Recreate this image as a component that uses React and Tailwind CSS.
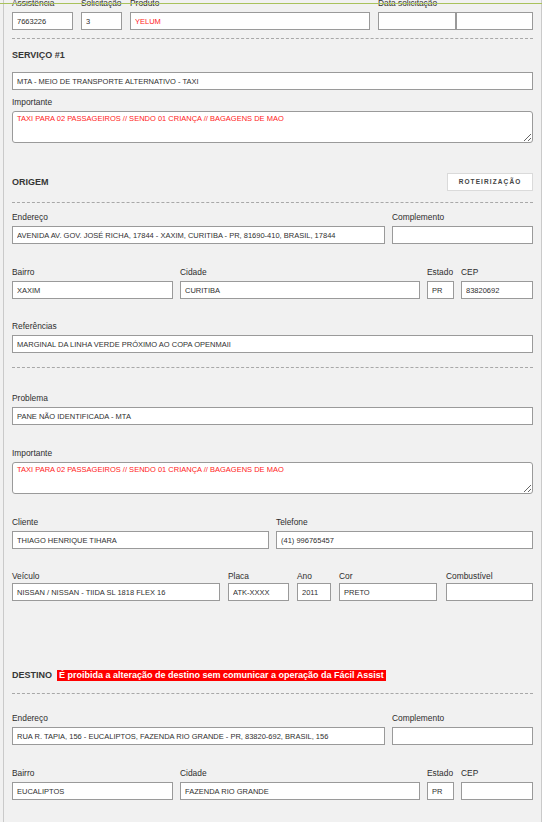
import React from "react";

function Label({ children, tight }) {
  return (
    <div
      className={
        tight
          ? "h-[12px] leading-[12px] text-[8.4px] text-[#2e2e2e] mb-[1px] whitespace-nowrap"
          : "h-[12px] leading-[12px] text-[8.4px] text-[#2e2e2e] mb-[3px] whitespace-nowrap"
      }
    >
      {children}
    </div>
  );
}

function Input({ value = "", red }) {
  return (
    <input
      readOnly
      defaultValue={value}
      className={
        red
          ? "block w-full h-[18px] border border-[#9a9a9a] bg-white px-[4px] text-[7.5px] text-[#ff2222] outline-none"
          : "block w-full h-[18px] border border-[#9a9a9a] bg-white px-[4px] text-[7.5px] text-[#2f2f2f] outline-none"
      }
    />
  );
}

function Area({ value }) {
  return (
    <textarea
      readOnly
      defaultValue={value}
      className="block w-full h-[32px] border border-[#9a9a9a] rounded-[3px] bg-white px-[4px] pt-[2px] text-[7.5px] leading-[9px] text-[#ff2222] outline-none resize-y"
    />
  );
}

function Field({ label, value, red, className, tight }) {
  return (
    <div className={className}>
      <Label tight={tight}>{label}</Label>
      <Input value={value} red={red} />
    </div>
  );
}

function Divider({ className }) {
  return <div className={className + " border-t border-dashed border-[#a8a8a8]"} />;
}

const IMPORTANTE = "TAXI PARA 02 PASSAGEIROS // SENDO 01 CRIANÇA // BAGAGENS DE MAO";

export default function App() {
  return (
    <div className="relative w-[549px] h-[822px] overflow-hidden bg-white flex font-['Liberation_Sans',Arial,sans-serif]">
      <div className="w-[3px] h-full bg-[#f1f1f1]" />
      <div className="w-[539px] h-full bg-[#f1f1f1] border-x border-[#cacaca] px-[8px]">
        {/* top row */}
        <div className="-mt-[3px] flex gap-[8px]">
          <Field className="w-[61px]" label="Assistência" value="7663226" />
          <Field className="w-[41px]" label="Solicitação" value="3" />
          <Field className="w-[240px]" label="Produto" value="YELUM" red />
          <div className="flex-1">
            <Label>Data solicitação</Label>
            <div className="flex">
              <div className="w-[78px]">
                <Input />
              </div>
              <div className="flex-1">
                <Input />
              </div>
            </div>
          </div>
        </div>

        <Divider className="mt-[8px]" />

        <div className="mt-[10px] h-[12px] leading-[12px] text-[9px] font-bold text-[#363636]">SERVIÇO #1</div>
        <div className="mt-[11px]">
          <Input value="MTA - MEIO DE TRANSPORTE ALTERNATIVO - TAXI" />
        </div>
        <div className="mt-[6px]">
          <Label>Importante</Label>
          <Area value={IMPORTANTE} />
        </div>

        <div className="mt-[30px] h-[18px] flex items-center justify-between">
          <div className="text-[9px] font-bold text-[#363636] leading-[12px]">ORIGEM</div>
          <button className="w-[86px] h-[18px] bg-white border border-[#dadada] text-[6.5px] font-bold tracking-[1.1px] text-[#444] flex items-center justify-center">
            ROTEIRIZAÇÃO
          </button>
        </div>

        <Divider className="mt-[11px]" />

        <div className="mt-[8px] flex gap-[7px]">
          <Field
            className="w-[373px]"
            label="Endereço"
            value="AVENIDA AV. GOV. JOSÉ RICHA, 17844 - XAXIM, CURITIBA - PR, 81690-410, BRASIL, 17844"
          />
          <Field className="flex-1" label="Complemento" value="" />
        </div>

        <div className="mt-[22px] flex gap-[7px]">
          <Field className="w-[161px]" label="Bairro" value="XAXIM" />
          <Field className="w-[240px]" label="Cidade" value="CURITIBA" />
          <Field className="w-[27px]" label="Estado" value="PR" />
          <Field className="flex-1" label="CEP" value="83820692" />
        </div>

        <Field
          className="mt-[21px]"
          label="Referências"
          value="MARGINAL DA LINHA VERDE PRÓXIMO AO COPA OPENMAII"
        />

        <Divider className="mt-[14px]" />

        <Field className="mt-[24px]" label="Problema" value="PANE NÃO IDENTIFICADA - MTA" />

        <div className="mt-[22px]">
          <Label>Importante</Label>
          <Area value={IMPORTANTE} />
        </div>

        <div className="mt-[22px] flex gap-[7px]">
          <Field className="flex-1" label="Cliente" value="THIAGO HENRIQUE TIHARA" />
          <Field className="flex-1" label="Telefone" value="(41) 996765457" />
        </div>

        <div className="mt-[21px] flex">
          <Field tight className="w-[208px]" label="Veículo" value="NISSAN / NISSAN - TIIDA SL 1818 FLEX 16" />
          <Field tight className="w-[61px] ml-[8px]" label="Placa" value="ATK-XXXX" />
          <Field tight className="w-[34px] ml-[8px]" label="Ano" value="2011" />
          <Field tight className="w-[98px] ml-[8px]" label="Cor" value="PRETO" />
          <Field tight className="flex-1 ml-[9px]" label="Combustível" value="" />
        </div>

        <div className="mt-[68px] h-[12px] flex items-center">
          <span className="text-[9px] font-bold text-[#363636] leading-[12px]">DESTINO</span>
          <span className="ml-[5px] bg-[#ff0000] text-white text-[9px] font-bold leading-[11px] px-[2px]">
            É proibida a alteração de destino sem comunicar a operação da Fácil Assist
          </span>
        </div>

        <Divider className="mt-[12px]" />

        <div className="mt-[18px] flex gap-[7px]">
          <Field
            className="w-[373px]"
            label="Endereço"
            value="RUA R. TAPIA, 156 - EUCALIPTOS, FAZENDA RIO GRANDE - PR, 83820-692, BRASIL, 156"
          />
          <Field className="flex-1" label="Complemento" value="" />
        </div>

        <div className="mt-[22px] flex gap-[7px]">
          <Field className="w-[161px]" label="Bairro" value="EUCALIPTOS" />
          <Field className="w-[240px]" label="Cidade" value="FAZENDA RIO GRANDE" />
          <Field className="w-[27px]" label="Estado" value="PR" />
          <Field className="flex-1" label="CEP" value="" />
        </div>
      </div>
      <div className="absolute left-0 top-[3px] w-[542px] h-px bg-[#a9c25c]" />
    </div>
  );
}
